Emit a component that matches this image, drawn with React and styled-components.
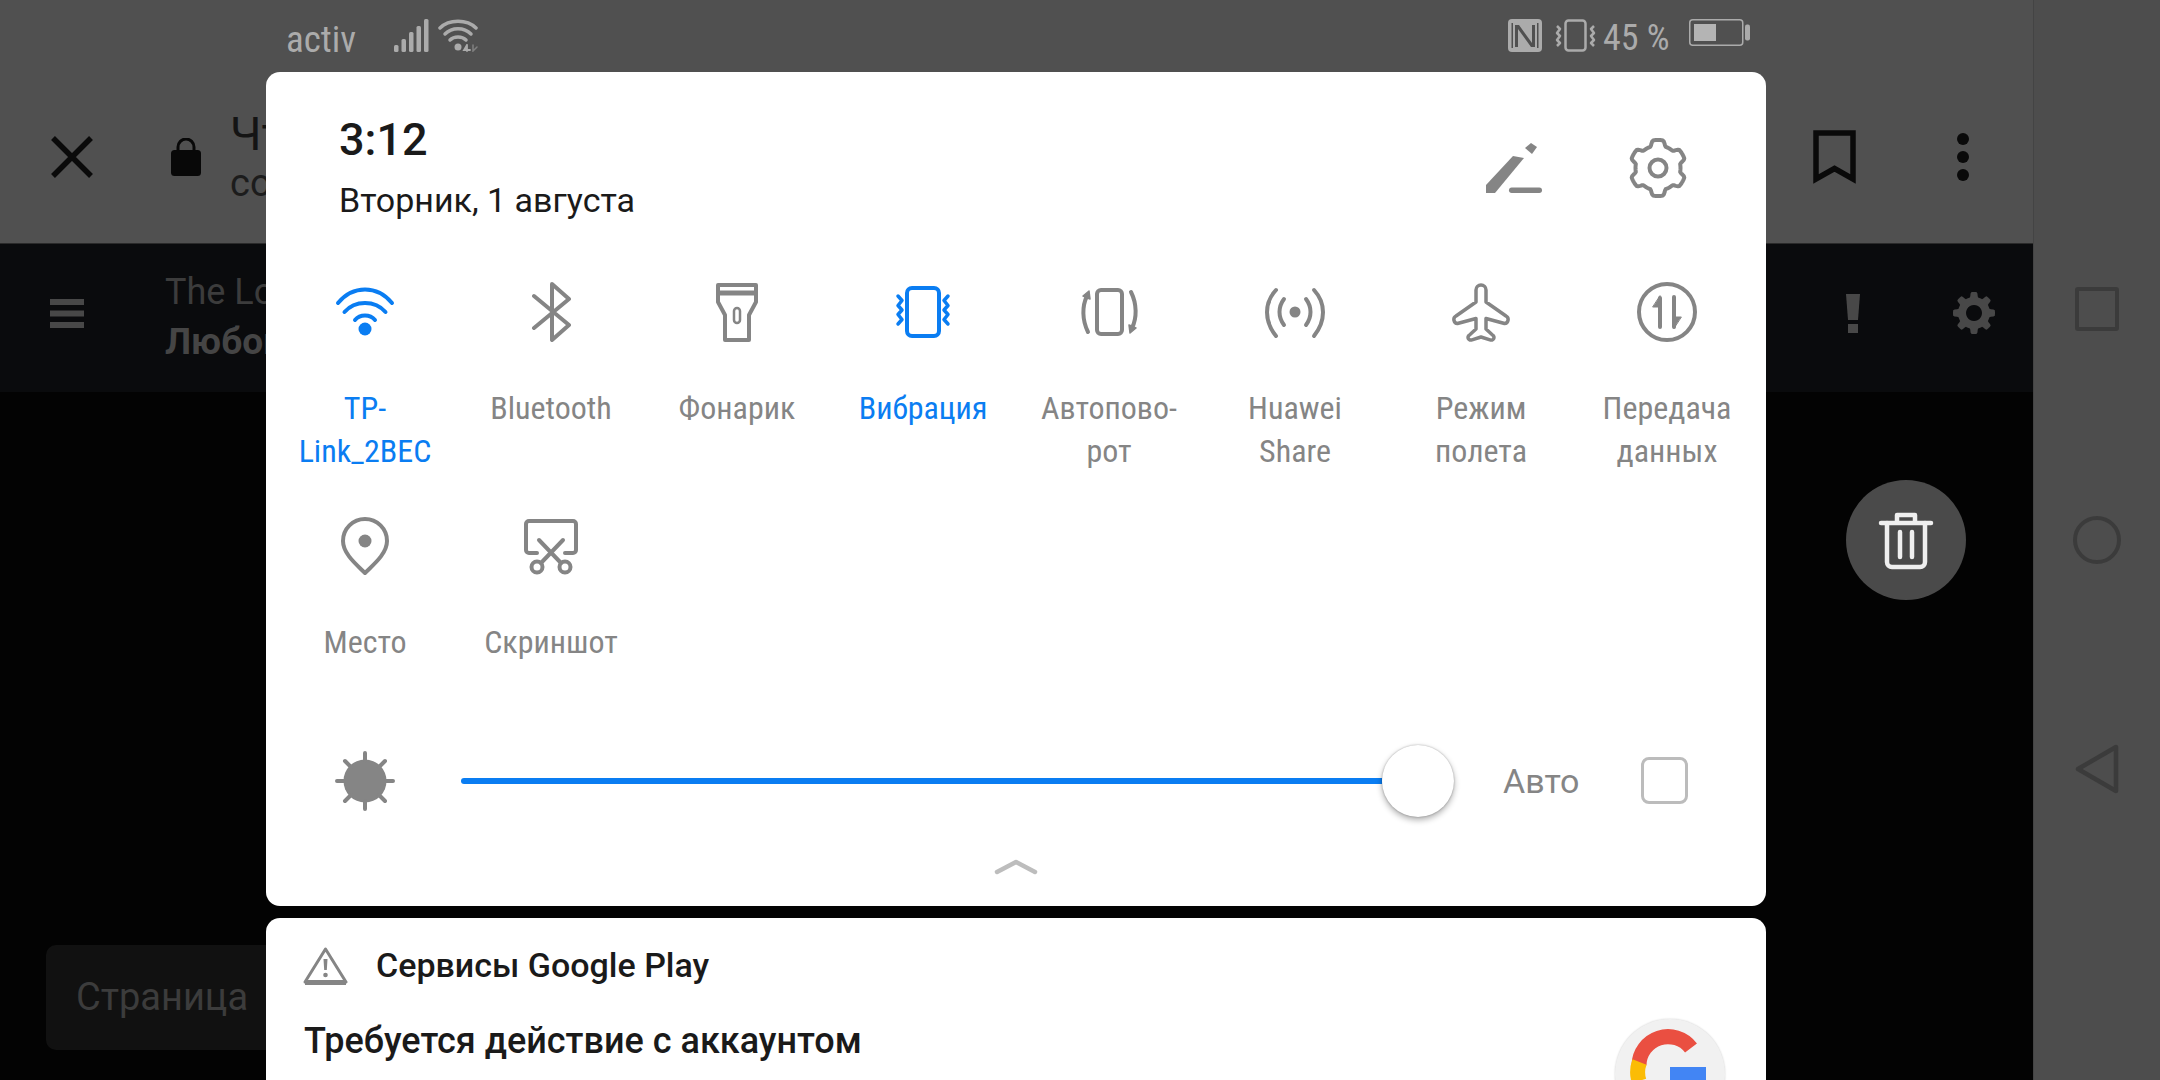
import React from "react";
import styled, { createGlobalStyle } from "styled-components";

const Global = createGlobalStyle`
  html, body { margin: 0; padding: 0; background: #030303; }
  #root { width: 2160px; height: 1080px; overflow: hidden; }
  * { box-sizing: border-box; }
`;

const GRAY = "#858585";
const BLUE = "#0a7df2";
const FONT = `Roboto, "Noto Sans", sans-serif`;

const Screen = styled.div`
  position: relative;
  width: 2160px;
  height: 1080px;
  display: grid;
  grid-template-columns: 2033px 127px;
  overflow: hidden;
  font-family: ${FONT};
`;
const Main = styled.div`
  display: flex;
  flex-direction: column;
  min-width: 0;
`;
const TopBar = styled.header`
  height: 243px;
  background: #505050;
  display: flex;
  flex-direction: column;
`;
const StatusBar = styled.div`
  height: 72px;
  display: flex;
  justify-content: space-between;
  padding: 19px 283px 0 286px;
  color: #ababab;
`;
const StatusGroup = styled.div`
  display: flex;
  align-items: flex-start;
  gap: ${(p) => p.$gap || 8}px;
`;
const Carrier = styled.span`
  font-size: 37px;
  line-height: 42px;
  font-stretch: 85%;
  margin-right: 26px;
  width: 73px;
  white-space: nowrap;
`;
const Percent = styled.span`
  font-size: 36px;
  line-height: 36px;
  margin-top: 1px;
  width: 74px;
  white-space: nowrap;
  font-stretch: 85%;
`;
const UrlRow = styled.div`
  flex: 1;
  display: flex;
  align-items: center;
  padding: 0 64px 2px 51px;
  color: #0a0a0a;
`;
const PageTitle = styled.div`
  margin-left: 29px;
  display: flex;
  flex-direction: column;
  white-space: nowrap;
`;
const PageName = styled.span`
  font-size: 46px;
  line-height: 52px;
  color: #141414;
`;
const PageHost = styled.span`
  font-size: 38px;
  line-height: 46px;
  color: #1c1c1c;
`;
const UrlActions = styled.div`
  margin-left: auto;
  display: flex;
  align-items: center;
  gap: 101px;
`;
const PageHeader = styled.div`
  height: 149px;
  background: #0a0b0d;
  border-top: 1px solid #2a2a2a;
  display: flex;
  align-items: center;
  padding: 0 38px 10px 50px;
  color: #454545;
`;
const HeaderTexts = styled.div`
  margin-left: 81px;
  padding-top: 8px;
  display: flex;
  flex-direction: column;
  white-space: nowrap;
`;
const Site = styled.span`
  font-size: 36px;
  line-height: 50px;
  color: #3c3c3c;
`;
const Section = styled.span`
  font-size: 37px;
  line-height: 50px;
  font-weight: 700;
`;
const HeaderActions = styled.div`
  margin-left: auto;
  display: flex;
  align-items: center;
  gap: 93px;
`;
const PageBody = styled.div`
  flex: 1;
  background: #030303;
  padding: 553px 0 0 46px;
`;
const SearchBox = styled.div`
  width: 500px;
  height: 105px;
  border-radius: 10px;
  background: #111111;
  color: #3c3c3c;
  font-size: 38px;
  line-height: 105px;
  padding-left: 30px;
  white-space: nowrap;
`;
const Nav = styled.nav`
  background: #4d4d4d;
  border-left: 1px solid #444;
  display: flex;
  flex-direction: column;
  align-items: center;
  padding-top: 287px;
`;
const NavSquare = styled.div`
  width: 44px;
  height: 44px;
  border: 4px solid #3b3b3b;
  border-radius: 3px;
`;
const NavCircle = styled.div`
  width: 48px;
  height: 48px;
  margin-top: 185px;
  border: 4px solid #3b3b3b;
  border-radius: 50%;
`;
const NavBack = styled.svg`
  margin-top: 180px;
  display: block;
`;
const Fab = styled.div`
  position: absolute;
  left: 1846px;
  top: 480px;
  width: 120px;
  height: 120px;
  border-radius: 50%;
  background: #4a4a4a;
  display: flex;
  align-items: center;
  justify-content: center;
`;
const Shade = styled.div`
  position: absolute;
  left: 266px;
  top: 72px;
  bottom: 0;
  width: 1500px;
  display: flex;
  flex-direction: column;
  gap: 12px;
  overflow: hidden;
`;
const QuickCard = styled.section`
  height: 834px;
  flex: none;
  background: #fff;
  border-radius: 14px;
  display: flex;
  flex-direction: column;
`;
const Head = styled.div`
  display: flex;
  justify-content: space-between;
  padding: 42px 78px 60px 73px;
`;
const Clock = styled.div`
  display: flex;
  flex-direction: column;
  gap: 12px;
`;
const Time = styled.div`
  font-size: 45px;
  line-height: 52px;
  font-weight: 500;
  color: #1a1a1a;
`;
const DateLine = styled.div`
  font-size: 34px;
  line-height: 44px;
  color: #1a1a1a;
`;
const HeadActions = styled.div`
  display: flex;
  gap: 85px;
  margin-top: 24px;
  align-items: flex-start;
`;
const TileGrid = styled.div`
  display: grid;
  grid-template-columns: repeat(8, 1fr);
  row-gap: 43px;
  margin: 0 6px;
`;
const Tile = styled.div`
  display: flex;
  flex-direction: column;
  align-items: center;
  color: ${(p) => (p.$on ? BLUE : GRAY)};
`;
const TileLabel = styled.div`
  margin-top: 45px;
  min-height: ${(p) => (p.$short ? 43 : 86)}px;
  font-size: 32px;
  line-height: 43px;
  font-stretch: 85%;
  text-align: center;
  white-space: pre-line;
`;
const BrightnessRow = styled.div`
  margin-top: 80px;
  height: 73px;
  display: flex;
  align-items: center;
  padding: 0 78px 0 69px;
`;
const Slider = styled.div`
  flex: 1;
  margin-left: 66px;
  display: flex;
  align-items: center;
`;
const SliderFill = styled.div`
  flex: 1;
  height: 6px;
  border-radius: 3px 0 0 3px;
  background: ${BLUE};
`;
const Thumb = styled.div`
  width: 72px;
  height: 72px;
  border-radius: 50%;
  background: #fff;
  box-shadow: 0 3px 6px rgba(0, 0, 0, 0.32), 0 0 2px rgba(0, 0, 0, 0.3);
`;
const AutoLabel = styled.span`
  margin-left: 49px;
  width: 79px;
  font-size: 34px;
  color: ${GRAY};
  white-space: nowrap;
`;
const AutoBox = styled.div`
  margin-left: 59px;
  width: 47px;
  height: 47px;
  border: 3px solid #bcbcbc;
  border-radius: 8px;
`;
const Chevron = styled.svg`
  display: block;
  align-self: center;
  margin-top: 42px;
`;
const NoticeCard = styled.section`
  flex: 1;
  background: #fff;
  border-radius: 14px 14px 0 0;
  padding: 27px 41px 0 37px;
  overflow: hidden;
`;
const NoticeHead = styled.div`
  display: flex;
  align-items: center;
  gap: 28px;
  height: 40px;
`;
const AppName = styled.span`
  font-size: 34px;
  font-weight: 500;
  color: #1a1a1a;
  white-space: nowrap;
`;
const NoticeBody = styled.div`
  margin-top: 34px;
  padding-left: 1px;
  display: flex;
  justify-content: space-between;
  align-items: flex-start;
`;
const NoticeTitle = styled.div`
  margin-top: 2px;
  font-size: 36px;
  line-height: 40px;
  font-weight: 500;
  color: #1a1a1a;
  white-space: nowrap;
`;
const Badge = styled.div`
  width: 110px;
  height: 110px;
  border-radius: 50%;
  background: #f1f1f1;
  box-shadow: 0 0 2px rgba(0, 0, 0, 0.2);
  flex: none;
`;
const Ico = styled.svg`
  display: block;
  flex: none;
`;

const gearPath = (cx, cy, r1, r2, teeth, sharp = 0.45) => {
  const pts = [];
  const N = 144;
  for (let i = 0; i < N; i++) {
    const a = (i / N) * Math.PI * 2;
    const c = Math.cos(teeth * a);
    let t = (c + sharp) / (2 * sharp);
    t = Math.max(0, Math.min(1, t));
    t = t * t * (3 - 2 * t);
    const r = r1 + (r2 - r1) * t;
    pts.push(`${(cx + r * Math.sin(a)).toFixed(2)} ${(cy - r * Math.cos(a)).toFixed(2)}`);
  }
  return `M${pts.join("L")}Z`;
};

const Svg = ({ w = 60, h = 60, children, sw = 4, vb }) => (
  <Ico
    width={w}
    height={h}
    viewBox={vb || `0 0 ${w} ${h}`}
    fill="none"
    stroke="currentColor"
    strokeWidth={sw}
    strokeLinecap="round"
    strokeLinejoin="round"
  >
    {children}
  </Ico>
);

const Wifi = () => (
  <Svg>
    <path d="M3 21C18 3 42 3 57 21" />
    <path d="M9.5 30C20 18 40 18 50.5 30" />
    <path d="M20 38C25 32 35 32 40 38" />
    <circle cx="30" cy="47" r="6.5" fill="currentColor" stroke="none" />
  </Svg>
);
const Bluetooth = () => (
  <Svg>
    <path d="M13 14L48 43L31 58V2L48 17L13 46" />
  </Svg>
);
const Flashlight = () => (
  <Svg>
    <path d="M11 3H49V20L42 33V58H18V33L11 20Z" />
    <path d="M11 11H49" strokeWidth="5" strokeLinecap="butt" />
    <rect x="27" y="26" width="6" height="15" rx="3" strokeWidth="2.5" />
  </Svg>
);
const Vibrate = () => (
  <Svg>
    <rect x="14" y="6" width="32" height="48" rx="5" />
    <path d="M5 14L9 18.5L5 23.5L9 28L5 32.5L9 37.5L5 42" strokeWidth="3.5" />
    <path d="M55 14L51 18.5L55 23.5L51 28L55 32.5L51 37.5L55 42" strokeWidth="3.5" />
  </Svg>
);
const Rotate = () => (
  <Svg>
    <rect x="18" y="8" width="25" height="44" rx="4" />
    <path d="M9 50C3 38 3 24 8 14" />
    <path d="M52 10C58 22 58 36 53 46" />
    <path d="M10 9L11 17L4 14Z" fill="currentColor" strokeWidth="1.5" />
    <path d="M51 51L50 43L57 46Z" fill="currentColor" strokeWidth="1.5" />
  </Svg>
);
const Share = () => (
  <Svg>
    <circle cx="30" cy="30" r="5.5" fill="currentColor" stroke="none" />
    <path d="M19 17C13 25 13 35 19 43" />
    <path d="M41 17C47 25 47 35 41 43" />
    <path d="M11 8C-1 21 -1 39 11 54" />
    <path d="M49 8C61 21 61 39 49 54" />
  </Svg>
);
const Plane = () => (
  <Svg sw={3.5}>
    <path d="M25 8a5 5 0 0 1 10 0V20L55 34a4 4 0 0 1-1.500 7.500L35 36.500V47L41.500 53a2.700 2.700 0 0 1-2.500 4.800L30 55L21 57.800a2.700 2.700 0 0 1-2.500-4.800L25 47V36.500L6.500 41.500A4 4 0 0 1 5 34L25 20Z" />
  </Svg>
);
const DataSwap = () => (
  <Svg>
    <circle cx="30" cy="30" r="28" />
    <path d="M23 16V45" />
    <path d="M37 15V45" />
    <path d="M23 14V25H16Z" fill="currentColor" strokeWidth="1" />
    <path d="M37 46V35H44Z" fill="currentColor" strokeWidth="1" />
  </Svg>
);
const Pin = () => (
  <Svg>
    <path d="M30 57C22 49 8 38 8 25a22 22 0 0 1 44 0C52 38 38 49 30 57Z" />
    <circle cx="30" cy="25" r="6.500" fill="currentColor" stroke="none" />
  </Svg>
);
const Screenshot = () => (
  <Svg>
    <path d="M16 37H8a3 3 0 0 1-3-3V8a3 3 0 0 1 3-3h44a3 3 0 0 1 3 3v26a3 3 0 0 1-3 3h-8" />
    <path d="M18 24L40 47M42 24L20 47" />
    <circle cx="16" cy="51" r="5.500" />
    <circle cx="44" cy="51" r="5.500" />
  </Svg>
);
const Sun = () => (
  <Ico width="60" height="60" viewBox="0 0 60 60" stroke={GRAY} strokeWidth="4" strokeLinecap="round">
    <circle cx="30" cy="30" r="21.500" fill={GRAY} stroke="none" />
    <path d="M30 2V10M30 50V58M2 30H10M50 30H58M10 10L16 16M44 44L50 50M50 10L44 16M16 44L10 50" />
  </Ico>
);
const Edit = () => (
  <Ico width="60" height="60" viewBox="0 0 60 60" fill={GRAY}>
    <path d="M30 18L41 20L12 55H3V47Z" />
    <path d="M42 10L48 5L54 9L49 16Z" />
    <rect x="26" y="49.500" width="33" height="5.500" rx="2.700" />
  </Ico>
);
const Settings = () => (
  <Ico width="60" height="60" viewBox="0 0 60 60" fill="none" stroke={GRAY} strokeWidth="4" strokeLinejoin="round">
    <path d={gearPath(30, 30, 22.5, 28, 6, 0.55)} />
    <circle cx="30" cy="30" r="8.500" />
  </Ico>
);
const Warning = () => (
  <Ico width="45" height="39" viewBox="0 0 45 39" fill="none">
    <path d="M22.500 3L43 36H2Z" stroke={GRAY} strokeWidth="3" strokeLinejoin="round" />
    <path d="M2 34H43V39H2Z" fill={GRAY} />
    <path d="M20.500 13H24.500L23.800 24H21.200Z" fill={GRAY} />
    <circle cx="22.500" cy="29" r="2.300" fill={GRAY} />
  </Ico>
);
const GoogleG = () => (
  <Ico width="110" height="61" viewBox="0 0 110 61" fill="none">
    <path d="M24 46A29 29 0 0 1 76 29" stroke="#ea4f41" strokeWidth="15" />
    <path d="M24.500 43A29 29 0 0 0 24 62" stroke="#fbbc05" strokeWidth="15" />
    <rect x="55" y="48" width="36" height="13" fill="#4285f4" />
  </Ico>
);
const Signal = () => (
  <Ico width="35" height="33" viewBox="0 0 35 33" fill="#ababab">
    <rect x="0" y="26" width="4.500" height="7" rx="1.500" />
    <rect x="7.500" y="20" width="4.500" height="13" rx="1.500" />
    <rect x="15" y="13" width="4.500" height="20" rx="1.500" />
    <rect x="22.500" y="7" width="4.500" height="26" rx="1.500" />
    <rect x="30" y="0" width="4.500" height="33" rx="1.500" />
  </Ico>
);
const StatusWifi = () => (
  <Ico width="40" height="33" viewBox="0 0 40 33" fill="none" stroke="#ababab" strokeWidth="3.500" strokeLinecap="round">
    <path d="M2 9C11 0 29 0 38 9" />
    <path d="M7 15C14 8 26 8 33 15" />
    <path d="M12 21C16 17 24 17 28 21" />
    <circle cx="20" cy="28" r="3.500" fill="#ababab" stroke="none" />
    <path d="M29 26V32M32 31H26L29 26" strokeWidth="1.800" />
    <path d="M35 26V32L39 28" strokeWidth="1.500" stroke="#808080" />
  </Ico>
);
const Nfc = () => (
  <Ico width="34" height="33" viewBox="0 0 34 33" fill="#ababab">
    <rect x="0" y="0" width="34" height="33" rx="4" />
    <path d="M7 6H11L24 24V6H27V28H23L10 10V28H7Z" fill="#505050" />
    <path d="M3.500 4H5V29H3.500ZM29 4H30.500V29H29Z" fill="#505050" />
  </Ico>
);
const StatusVibrate = () => (
  <Ico width="43" height="33" viewBox="0 0 43 33" fill="none" stroke="#ababab" strokeWidth="2.500" strokeLinejoin="round">
    <rect x="11.500" y="1.500" width="20" height="30" rx="3" />
    <path d="M3 7L6 10L3 14L6 17L3 21L6 24L3 27" />
    <path d="M40 7L37 10L40 14L37 17L40 21L37 24L40 27" />
  </Ico>
);
const Battery = () => (
  <Ico width="61" height="27" viewBox="0 0 61 27" fill="none">
    <rect x="0.750" y="0.750" width="53" height="25.500" rx="3" stroke="#ababab" strokeWidth="1.500" />
    <rect x="5" y="5" width="22" height="17" fill="#b4b4b4" />
    <rect x="56" y="5.500" width="5" height="16" rx="2" fill="#ababab" />
  </Ico>
);
const Close = () => (
  <Ico width="42" height="42" viewBox="0 0 42 42" stroke="#0a0a0a" strokeWidth="5.500">
    <path d="M2 2L40 40M40 2L2 40" />
  </Ico>
);
const Lock = () => (
  <Ico width="30" height="38" viewBox="0 0 30 38" fill="#080808">
    <rect x="0" y="12" width="30" height="26" rx="3.500" />
    <path d="M7 14V9a8 8 0 0 1 16 0V14" fill="none" stroke="#080808" strokeWidth="3" />
  </Ico>
);
const Bookmark = () => (
  <Ico width="43" height="54" viewBox="0 0 43 54" fill="none" stroke="#0a0a0a" strokeWidth="5.500">
    <path d="M3 3H40V49L21.500 38.500L3 49Z" />
  </Ico>
);
const Dots = () => (
  <Ico width="12" height="48" viewBox="0 0 12 48" fill="#0a0a0a">
    <circle cx="6" cy="6" r="6" />
    <circle cx="6" cy="24" r="6" />
    <circle cx="6" cy="42" r="6" />
  </Ico>
);
const Burger = () => (
  <Ico width="34" height="29" viewBox="0 0 34 29" fill="#484848">
    <rect x="0" y="0" width="34" height="6" />
    <rect x="0" y="11.500" width="34" height="6" />
    <rect x="0" y="23" width="34" height="6" />
  </Ico>
);
const Exclaim = () => (
  <Ico width="14" height="39" viewBox="0 0 14 39" fill="#484848">
    <path d="M0 0H14L12 26H2Z" />
    <rect x="2" y="30" width="10" height="9" />
  </Ico>
);
const HeaderGear = () => (
  <Ico width="42" height="42" viewBox="0 0 42 42">
    <path fillRule="evenodd" fill="#484848" d={`${gearPath(21, 21, 16, 21, 8, 0.5)}M21 13a8 8 0 1 0 0.010 0Z`} />
  </Ico>
);
const Trash = () => (
  <Ico width="60" height="60" viewBox="0 0 60 60" fill="none" stroke="#efefef" strokeWidth="4.500" strokeLinecap="round" strokeLinejoin="round">
    <path d="M5 13H55" />
    <path d="M21 12V5H39V12" />
    <path d="M11 13V52a5 5 0 0 0 5 5H44a5 5 0 0 0 5-5V13" />
    <path d="M24 22V47M36 22V47" />
  </Ico>
);

const tiles = [
  { label: "TP-\nLink_2BEC", Icon: Wifi, on: true },
  { label: "Bluetooth", Icon: Bluetooth },
  { label: "Фонарик", Icon: Flashlight },
  { label: "Вибрация", Icon: Vibrate, on: true },
  { label: "Автопово-\nрот", Icon: Rotate },
  { label: "Huawei\nShare", Icon: Share },
  { label: "Режим\nполета", Icon: Plane },
  { label: "Передача\nданных", Icon: DataSwap },
  { label: "Место", Icon: Pin, short: true },
  { label: "Скриншот", Icon: Screenshot, short: true },
];

export default function App() {
  return (
    <Screen>
      <Global />
      <Main>
        <TopBar>
          <StatusBar>
            <StatusGroup $gap={9}>
              <Carrier>activ</Carrier>
              <Signal />
              <StatusWifi />
            </StatusGroup>
            <StatusGroup $gap={12}>
              <Nfc />
              <StatusGroup $gap={6}>
                <StatusVibrate />
                <Percent>45 %</Percent>
              </StatusGroup>
              <Battery />
            </StatusGroup>
          </StatusBar>
          <UrlRow>
            <Close />
            <StatusGroup $gap={0} style={{ marginLeft: 78 }}>
              <Lock />
            </StatusGroup>
            <PageTitle>
              <PageName>Чтение</PageName>
              <PageHost>community</PageHost>
            </PageTitle>
            <UrlActions>
              <Bookmark />
              <Dots />
            </UrlActions>
          </UrlRow>
        </TopBar>
        <PageHeader>
          <Burger />
          <HeaderTexts>
            <Site>The Lounge</Site>
            <Section>Любой</Section>
          </HeaderTexts>
          <HeaderActions>
            <Exclaim />
            <HeaderGear />
          </HeaderActions>
        </PageHeader>
        <PageBody>
          <SearchBox>Страница</SearchBox>
        </PageBody>
      </Main>
      <Nav>
        <NavSquare />
        <NavCircle />
        <NavBack width="44" height="50" viewBox="0 0 44 50" fill="none" stroke="#3b3b3b" strokeWidth="4.500" strokeLinejoin="round">
          <path d="M3 25L41 3V47Z" />
        </NavBack>
      </Nav>
      <Fab>
        <Trash />
      </Fab>
      <Shade>
        <QuickCard>
          <Head>
            <Clock>
              <Time>3:12</Time>
              <DateLine>Вторник, 1 августа</DateLine>
            </Clock>
            <HeadActions>
              <Edit />
              <Settings />
            </HeadActions>
          </Head>
          <TileGrid>
            {tiles.map(({ label, Icon, on, short }) => (
              <Tile key={label} $on={on}>
                <Icon />
                <TileLabel $short={short}>{label}</TileLabel>
              </Tile>
            ))}
          </TileGrid>
          <BrightnessRow>
            <Sun />
            <Slider>
              <SliderFill />
              <Thumb />
            </Slider>
            <AutoLabel>Авто</AutoLabel>
            <AutoBox />
          </BrightnessRow>
          <Chevron width="44" height="16" viewBox="0 0 44 16" fill="none" stroke="#bdbdbd" strokeWidth="4.500" strokeLinecap="round" strokeLinejoin="round">
            <path d="M3 13L22 3L41 13" />
          </Chevron>
        </QuickCard>
        <NoticeCard>
          <NoticeHead>
            <Warning />
            <AppName>Сервисы Google Play</AppName>
          </NoticeHead>
          <NoticeBody>
            <NoticeTitle>Требуется действие с аккаунтом</NoticeTitle>
            <Badge>
              <GoogleG />
            </Badge>
          </NoticeBody>
        </NoticeCard>
      </Shade>
    </Screen>
  );
}
